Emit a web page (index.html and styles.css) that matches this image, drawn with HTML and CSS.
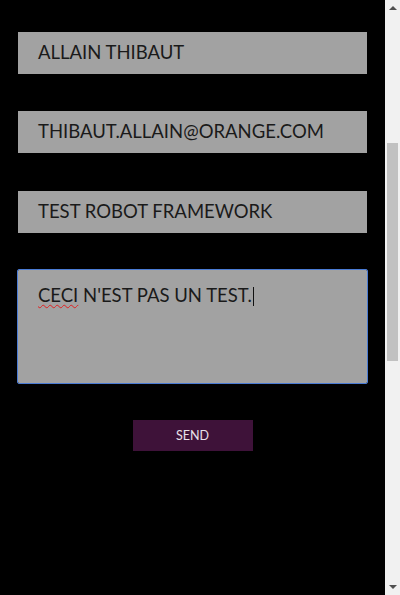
FILE: index.html
```html
<!DOCTYPE html>
<html lang="fr">
<head>
<meta charset="utf-8">
<title>Contact</title>
<link rel="stylesheet" href="styles.css">
</head>
<body>
<div class="window">
  <main class="page">
    <form class="contact">
      <div class="field">ALLAIN THIBAUT</div>
      <div class="field">THIBAUT.ALLAIN@ORANGE.COM</div>
      <div class="field third">TEST ROBOT FRAMEWORK</div>
      <div class="field area" role="textbox"><span class="typo">CECI</span> N'EST PAS UN TEST.<span class="caret"></span></div>
      <div class="actions"><button type="button" class="send">SEND</button></div>
    </form>
  </main>
  <div class="scrollbar">
    <div class="arrow up"></div>
    <div class="track"><div class="thumb"></div></div>
    <div class="arrow down"></div>
  </div>
</div>
</body>
</html>
```

FILE: styles.css
```css
html, body {
  margin: 0;
  padding: 0;
  height: 100%;
  background: #000;
}
.window {
  display: flex;
  width: 400px;
  height: 595px;
  overflow: hidden;
}
.page {
  flex: 1;
  min-width: 0;
  overflow: hidden;
  background: #000;
  padding: 32px 18px 0 18px;
}
.contact {
  display: flex;
  flex-direction: column;
  gap: 37px;
}
.field {
  height: 42px;
  background: #a2a2a2;
  color: #1a1a1a;
  font-family: "Lato", "Liberation Sans", sans-serif;
  font-size: 18.5px;
  line-height: 40px;
  padding-left: 20px;
  white-space: nowrap;
}
.third {
  margin-top: 1px;
}
.area {
  height: 113px;
  line-height: 26px;
  padding-top: 12px;
  box-sizing: border-box;
  outline: 1px solid #4a7bd4;
  border-radius: 1px;
}
.typo {
  text-decoration: underline wavy #e02020;
  text-decoration-thickness: 1px;
  text-underline-offset: 2px;
}
.caret {
  display: inline-block;
  width: 1px;
  height: 19px;
  background: #111;
  vertical-align: -4px;
  margin-left: 1px;
}
.actions {
  display: flex;
  justify-content: center;
}
.send {
  width: 120px;
  height: 31px;
  border: 0;
  background: #3e1239;
  color: #e8e0ea;
  font-family: "Lato", "Liberation Sans", sans-serif;
  font-size: 12.5px;
  line-height: 28px;
  padding: 0;
}
.scrollbar {
  flex: 0 0 15px;
  background: #f1f1f1;
  display: flex;
  flex-direction: column;
}
.arrow {
  height: 17px;
  position: relative;
}
.arrow::after {
  content: "";
  position: absolute;
  left: 4px;
  border-left: 4px solid transparent;
  border-right: 4px solid transparent;
}
.up::after {
  top: 6px;
  border-bottom: 4px solid #505050;
}
.down::after {
  top: 7px;
  border-top: 4px solid #505050;
}
.track {
  flex: 1;
  padding-top: 126px;
}
.thumb {
  margin-left: 2px;
  width: 11px;
  height: 218px;
  background: #c1c1c1;
}
```
